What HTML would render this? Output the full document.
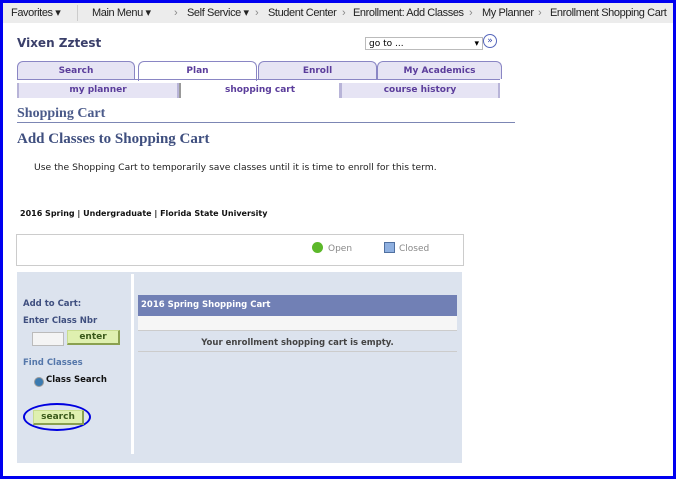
<html><head><style>
body{margin:0;width:676px;height:479px;overflow:hidden;font-family:"DejaVu Sans",Verdana,sans-serif;}
#f{position:absolute;left:0;top:0;width:670px;height:473px;border:3px solid #0000f0;background:#fff;}
.a{position:absolute;white-space:nowrap}
.bar{left:0;top:0;width:670px;height:20px;background:#ececec;font-family:"Liberation Sans",Arial,sans-serif;font-size:11px;color:#222;line-height:20px;overflow:hidden}
.bar span{position:absolute;letter-spacing:-0.4px}
.tab{position:absolute;top:58px;height:17px;border:1px solid #8a86c4;border-bottom:none;border-radius:6px 6px 0 0;background:#e6e4f4;font-size:9px;font-weight:bold;color:#5b3d9b;text-align:center;line-height:19px}
.st{position:absolute;top:80px;height:15px;background:#e6e4f4;border-left:2px solid #b8b4d8;border-right:2px solid #b8b4d8;font-size:9px;font-weight:bold;color:#5b3d9b;text-align:center;line-height:15px}
.btn{position:absolute;background:#dff0b0;border:1px solid #c8dc90;border-right:2px solid #8aa050;border-bottom:2px solid #8aa050;font-size:9px;font-weight:bold;color:#3a5a1a;text-align:center}
</style></head><body><div id="f">
<div class="a bar"><span style="left:8px">Favorites ▾</span><span style="left:74px;top:2px;height:16px;border-left:1px solid #ccc"></span><span style="left:89px">Main Menu ▾</span><span style="left:171px;color:#888">›</span><span style="left:184px">Self Service ▾</span><span style="left:252px;color:#888">›</span><span style="left:265px">Student Center</span><span style="left:339px;color:#888">›</span><span style="left:350px">Enrollment: Add Classes</span><span style="left:466px;color:#888">›</span><span style="left:479px">My Planner</span><span style="left:535px;color:#888">›</span><span style="left:547px">Enrollment Shopping Cart</span></div>
<div class="a" style="left:14px;top:33px;font-size:12px;font-weight:bold;color:#3a3f6a">Vixen Zztest</div>
<div class="a" style="left:362px;top:34px;height:13px;border:1px solid #bbb;font-size:9px;line-height:13px;padding-left:3px;box-sizing:border-box;width:118px">go to ...<span style="position:absolute;right:3px">▾</span></div>
<div class="a" style="left:480px;top:31px;width:12px;height:12px;border:1px solid #5566bb;border-radius:50%;font-size:9px;line-height:12px;text-align:center;color:#3344aa">»</div>
<div class="tab" style="left:14px;width:116px">Search</div>
<div class="tab" style="left:135px;width:117px;background:#fff;height:19px">Plan</div>
<div class="tab" style="left:255px;width:117px">Enroll</div>
<div class="tab" style="left:374px;width:123px">My Academics</div>
<div class="a" style="left:14px;top:76px;width:483px;height:1px;background:#8a86c4"></div>
<div class="st" style="left:14px;width:158px">my planner</div>
<div class="st" style="left:176px;width:158px;background:#fff;border-left-color:#999">shopping cart</div>
<div class="st" style="left:337px;width:156px">course history</div>
<div class="a" style="left:14px;top:103px;font-family:'Liberation Serif',serif;font-size:14px;font-weight:bold;color:#4a5a8a">Shopping Cart</div>
<div class="a" style="left:14px;top:119px;width:498px;height:1px;background:#7c86b4"></div>
<div class="a" style="left:14px;top:128px;font-family:'Liberation Serif',serif;font-size:15px;font-weight:bold;color:#3f4f7f">Add Classes to Shopping Cart</div>
<div class="a" style="left:31px;top:159px;font-size:9.2px;color:#222">Use the Shopping Cart to temporarily save classes until it is time to enroll for this term.</div>
<div class="a" style="left:17px;top:206px;font-size:8px;font-weight:bold;color:#111">2016 Spring | Undergraduate | Florida State University</div>
<div class="a" style="left:13px;top:231px;width:446px;height:30px;border:1px solid #ccc"></div>
<div class="a" style="left:309px;top:239px;width:11px;height:11px;border-radius:50%;background:#5cb82a"></div>
<div class="a" style="left:325px;top:241px;font-size:9px;color:#888">Open</div>
<div class="a" style="left:381px;top:239px;width:9px;height:9px;background:#8fb0e0;border:1px solid #5070a0"></div>
<div class="a" style="left:396px;top:241px;font-size:9px;color:#888">Closed</div>
<div class="a" style="left:14px;top:269px;width:445px;height:191px;background:#dce3ee"></div>
<div class="a" style="left:128px;top:271px;width:3px;height:180px;background:#fff"></div>
<div class="a" style="left:20px;top:296px;font-size:8.5px;font-weight:bold;color:#3f4f7f">Add to Cart:</div>
<div class="a" style="left:20px;top:313px;font-size:8.5px;font-weight:bold;color:#3f4f7f">Enter Class Nbr</div>
<div class="a" style="left:29px;top:329px;width:30px;height:12px;background:#f4f4f4;border:1px solid #bbb"></div>
<div class="btn" style="left:64px;top:327px;width:50px;height:12px;line-height:12px">enter</div>
<div class="a" style="left:20px;top:355px;font-size:8.5px;font-weight:bold;color:#5577aa">Find Classes</div>
<div class="a" style="left:31px;top:374px;width:8px;height:8px;border-radius:50%;background:#3a7ab0;border:1px solid #999"></div>
<div class="a" style="left:43px;top:372px;font-size:8.5px;font-weight:bold;color:#111">Class Search</div>
<div class="a" style="left:20px;top:400px;width:68px;height:28px;border:2px solid #0000e0;border-radius:50%;box-sizing:border-box"></div>
<div class="btn" style="left:30px;top:407px;width:48px;height:12px;line-height:12px">search</div>
<div class="a" style="left:135px;top:292px;width:319px;height:21px;background:#7180b5;color:#fff;font-size:8.5px;font-weight:bold;line-height:21px;padding-left:3px;box-sizing:border-box">2016 Spring Shopping Cart</div>
<div class="a" style="left:135px;top:313px;width:319px;height:14px;background:#f6f6f6;border-bottom:1px solid #ccc"></div>
<div class="a" style="left:135px;top:328px;width:319px;height:20px;border-bottom:1px solid #ccc;text-align:center;font-size:8.5px;font-weight:bold;color:#444;line-height:24px">Your enrollment shopping cart is empty.</div>
</div></body></html>
